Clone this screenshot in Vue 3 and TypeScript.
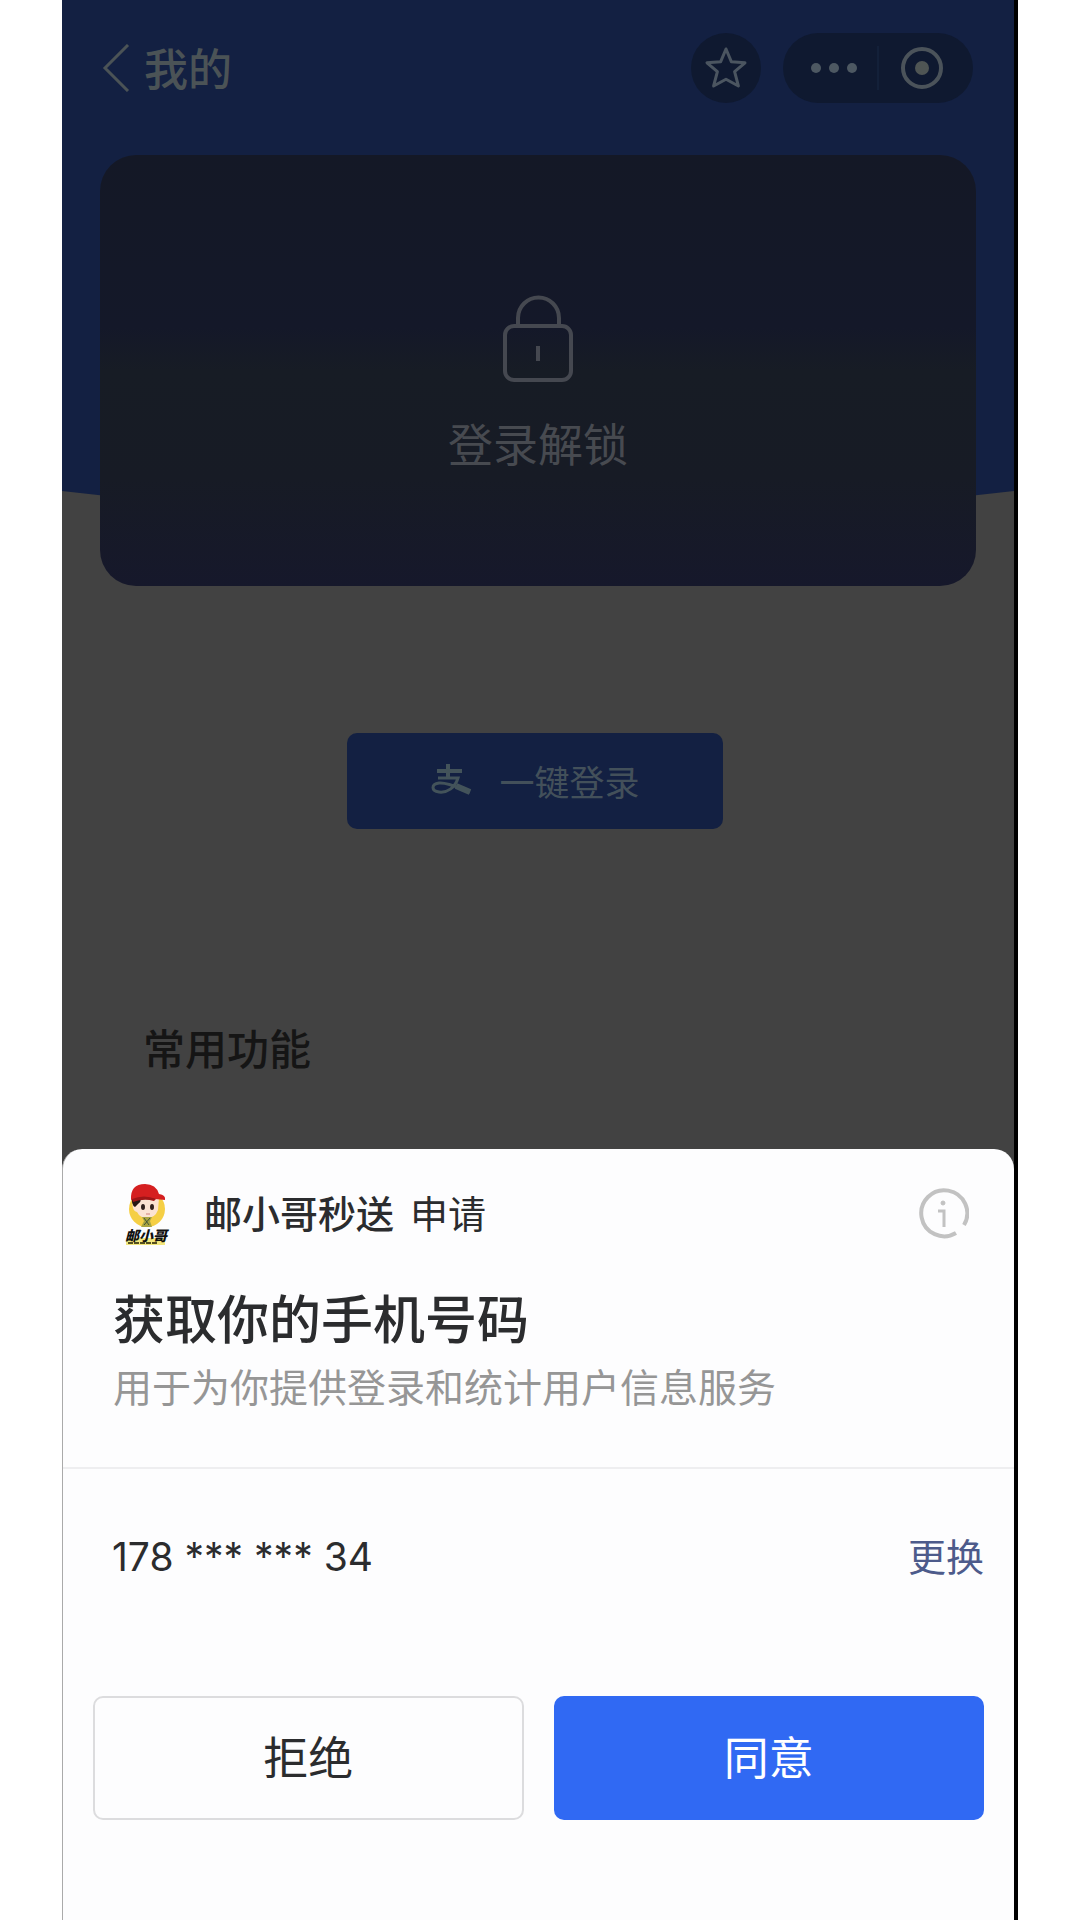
<script setup lang="ts">
import { ref } from 'vue'

const appName = ref('邮小哥秒送')
const maskedPhone = ref('178 *** *** 34')
</script>

<template>
  <div class="frame">
    <main class="page">
      <svg class="hero-bg" viewBox="0 0 952 520" preserveAspectRatio="none" aria-hidden="true">
        <path d="M0 0H952V491Q476 547 0 491Z" fill="#132042" />
      </svg>

      <header class="nav">
        <button class="back" type="button" aria-label="返回">
          <svg width="28" height="48" viewBox="0 0 28 48" fill="none" stroke="#4b5356" stroke-width="3">
            <path d="M26 1L3 24L26 47" />
          </svg>
        </button>
        <h1 class="nav-title">我的</h1>
        <button class="round" type="button" aria-label="收藏">
          <svg width="44" height="44" viewBox="0 0 44 44" fill="none" stroke="#4b5560" stroke-width="3" stroke-linejoin="round">
            <path d="M22 3L27.3 15.7L41 16.8L30.6 25.7L34.4 40L22 33.2L9.6 40L13.4 25.7L3 16.8L16.7 15.7Z" />
          </svg>
        </button>
        <div class="capsule">
          <button class="cap-btn" type="button" aria-label="更多">
            <svg width="48" height="12" viewBox="0 0 48 12" fill="#4d5862">
              <circle cx="6" cy="6" r="5" />
              <circle cx="24" cy="6" r="5" />
              <circle cx="42" cy="6" r="5" />
            </svg>
          </button>
          <span class="cap-line"></span>
          <button class="cap-btn" type="button" aria-label="关闭">
            <svg width="44" height="44" viewBox="0 0 44 44">
              <circle cx="22" cy="22" r="19" fill="none" stroke="#4b535a" stroke-width="4" />
              <circle cx="22" cy="22" r="7" fill="#4f5554" />
            </svg>
          </button>
        </div>
      </header>

      <section class="card">
        <svg width="70" height="88" viewBox="0 0 70 88" fill="none" stroke="#454850" stroke-width="4">
          <path d="M15 31V23A20 20 0 0 1 56 23V31" />
          <rect x="2" y="31" width="66" height="54" rx="9" />
          <path d="M35 51V66" />
        </svg>
        <p class="card-text">登录解锁</p>
      </section>

      <button class="login" type="button">
        <svg width="42" height="34" viewBox="0 0 42 34" fill="none" stroke="#43535a">
          <path d="M7 8H32M18 1V14" stroke-width="4" />
          <path d="M8 15H28C25 25 17 30 9 29C1 28 1 21 9 20C18 19 29 25 40 29" stroke-width="3" />
          <path d="M26 23L40 29" stroke-width="6" />
        </svg>
        <span>一键登录</span>
      </button>

      <h2 class="section-title">常用功能</h2>
    </main>

    <section class="sheet" role="dialog" aria-labelledby="sheet-title">
      <header class="sheet-head">
        <svg class="logo" width="48" height="66" viewBox="0 0 48 66" aria-hidden="true">
          <circle cx="23" cy="28" r="18" fill="#f5cf45" />
          <path d="M9 16Q7 30 13 31Q16 37 23 37Q31 37 34 29L35 17Z" fill="#fbe3d3" />
          <path d="M8 15Q7 24 11 26L14 23Q17 21 17 18L34 18V14Z" fill="#241614" />
          <path d="M7 19Q6 3 21 3Q32 3 35 13Q42 14 41 19L31 18Q18 15 7 19Z" fill="#d51f20" />
          <path d="M8 18Q20 13 32 18L30 20Q20 17 9 21Z" fill="#9f1517" />
          <ellipse cx="19" cy="26" rx="2" ry="3" fill="#30211e" />
          <ellipse cx="28" cy="26" rx="2" ry="3" fill="#30211e" />
          <path d="M22 33H26" stroke="#cf8178" stroke-width="1" />
          <path d="M18 36H28L26 40L28 46H17L20 40Z" fill="#a9a440" />
          <path d="M20 37L25 44M26 37L20 44" stroke="#415537" stroke-width="1" />
          <rect x="2" y="57" width="39" height="7" fill="#f3e77d" />
          <text x="1" y="60" class="logo-text">邮小哥</text>
          <path d="M4 62H33" stroke="#55501f" stroke-width="2" stroke-dasharray="5 1" />
        </svg>
        <p class="request"><strong>{{ appName }}</strong><span>申请</span></p>
        <button class="info" type="button" aria-label="说明">
          <svg width="52" height="52" viewBox="0 0 52 52" fill="none" stroke="#c2c2c2" stroke-width="4">
            <path d="M39 45A23 23 0 1 1 47 37" />
            <path d="M21 23H27V39" stroke-width="3" />
            <circle cx="26" cy="15" r="2" fill="#c2c2c2" stroke-width="1" />
          </svg>
        </button>
      </header>
      <h2 id="sheet-title" class="sheet-title">获取你的手机号码</h2>
      <p class="sheet-desc">用于为你提供登录和统计用户信息服务</p>
      <div class="phone-row">
        <span class="phone">{{ maskedPhone }}</span>
        <a class="change" href="#">更换</a>
      </div>
      <div class="actions">
        <button class="action reject" type="button">拒绝</button>
        <button class="action agree" type="button">同意</button>
      </div>
    </section>
  </div>
</template>

<style>
body {
  background: #fff;
}
</style>

<style scoped>
.frame {
  display: flex;
  flex-direction: column;
  box-sizing: border-box;
  min-height: 100vh;
  margin: 0 62px;
  border-right: 4px solid #000;
  background: #424242;
  font-family: "Noto Sans CJK SC", "Noto Sans", sans-serif;
}

h1, h2, p {
  margin: 0;
}

button {
  display: flex;
  align-items: center;
  justify-content: center;
  margin: 0;
  padding: 0;
  border: 0;
  background: none;
  font-family: inherit;
  cursor: pointer;
}

.page {
  position: relative;
  display: flex;
  flex-direction: column;
  padding-bottom: 72px;
}

.hero-bg {
  position: absolute;
  top: 0;
  left: 0;
  width: 100%;
  height: 520px;
}

.nav {
  position: relative;
  display: flex;
  align-items: center;
  height: 136px;
  padding: 0 41px 0 40px;
}

.nav-title {
  flex: 1;
  margin-left: 14px;
  padding-bottom: 2px;
  color: #4b5356;
  font-size: 44px;
  font-weight: 500;
  line-height: 60px;
}

.round {
  width: 70px;
  height: 70px;
  border-radius: 50%;
  background: #0f1930;
}

.capsule {
  display: flex;
  align-items: center;
  box-sizing: border-box;
  width: 190px;
  height: 70px;
  margin-left: 22px;
  padding: 0 8px;
  border-radius: 35px;
  background: #0f1930;
}

.cap-btn {
  flex: 1;
  height: 70px;
}

.cap-line {
  width: 2px;
  height: 44px;
  background: #132039;
}

.card {
  position: relative;
  display: flex;
  flex-direction: column;
  align-items: center;
  gap: 30px;
  margin: 19px 38px 0;
  padding: 140px 0 113px;
  border-radius: 36px;
  background: linear-gradient(#141826, #141829 40%, #171c25 50%, #171b25 75%, #16182b);
}

.card-text {
  color: #474a50;
  font-size: 45px;
  line-height: 60px;
}

.login {
  align-self: center;
  gap: 27px;
  width: 376px;
  height: 96px;
  margin: 147px 6px 0 0;
  padding-bottom: 2px;
  border-radius: 10px;
  background: #132042;
  color: #43505a;
  font-size: 35px;
}

.section-title {
  margin: 188px 0 0 81px;
  color: #151515;
  font-size: 42px;
  font-weight: 500;
  line-height: 60px;
}

.sheet {
  position: relative;
  flex: 1;
  padding-top: 32px;
  padding-bottom: 100px;
  border-left: 1px solid #aaa;
  border-radius: 20px 20px 0 0;
  background: #fdfdfe;
  color: #2b2c2e;
}

.sheet-head {
  display: flex;
  align-items: center;
  padding: 0 45px 0 61px;
}

.logo-text {
  font-size: 14px;
  font-style: italic;
  font-weight: 900;
  fill: #111;
}

.request {
  display: flex;
  flex: 1;
  gap: 16px;
  margin-left: 32px;
  padding-bottom: 4px;
  font-size: 38px;
  line-height: 56px;
}

.request strong {
  font-weight: 500;
}

.sheet-title {
  margin: 38px 50px 0;
  font-size: 52px;
  font-weight: 500;
  line-height: 64px;
}

.sheet-desc {
  margin: 10px 50px 56px;
  color: #969696;
  font-size: 39px;
  line-height: 52px;
}

.phone-row {
  display: flex;
  align-items: center;
  justify-content: space-between;
  height: 174px;
  padding: 0 30px 0 49px;
  border-top: 2px solid #eeeef0;
}

.phone {
  font-family: Inter, "Noto Sans CJK SC", sans-serif;
  font-size: 39px;
  font-weight: 400;
}

.change {
  padding-bottom: 4px;
  color: #4d5b8b;
  font-size: 38px;
  text-decoration: none;
}

.actions {
  display: grid;
  grid-template-columns: 1fr 1fr;
  gap: 30px;
  margin: 53px 30px 0;
}

.action {
  box-sizing: border-box;
  height: 124px;
  padding-bottom: 6px;
  border-radius: 10px;
  font-size: 45px;
}

.reject {
  border: 2px solid #dcdcde;
  color: #2b2c2e;
}

.agree {
  background: #3069f3;
  color: #fff;
}
</style>
